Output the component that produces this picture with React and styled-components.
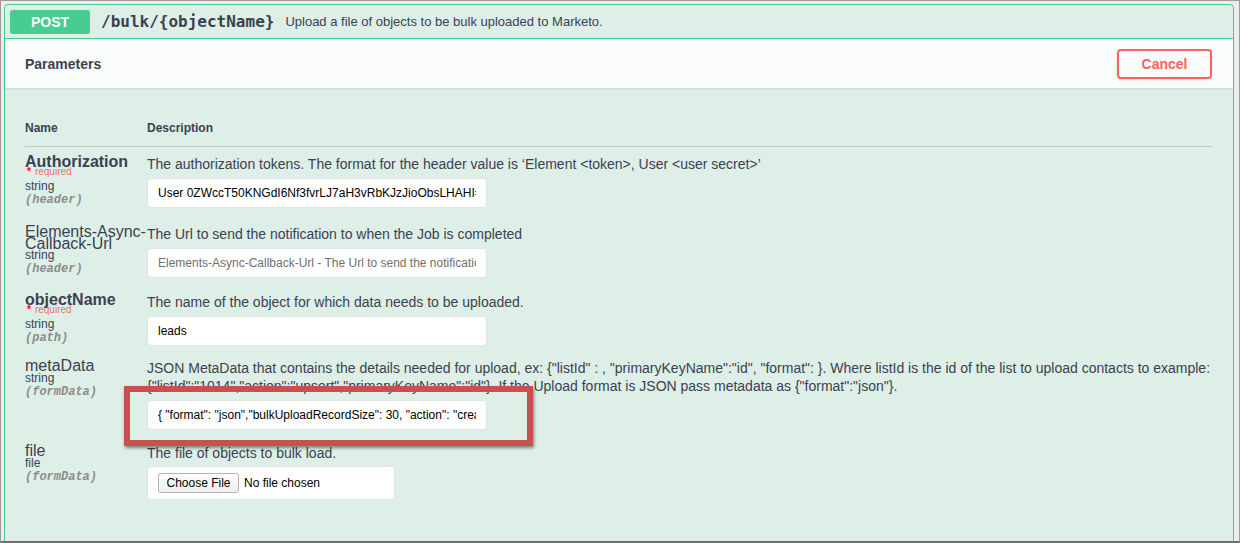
import React from 'react';
import styled, { createGlobalStyle } from 'styled-components';

const GlobalStyle = createGlobalStyle`
  html, body {
    margin: 0;
    padding: 0;
    background: #ececec;
  }
  body {
    font-family: "Liberation Sans", Arial, sans-serif;
    color: #3b4151;
  }
`;

const Frame = styled.div`
  width: 1240px;
  height: 543px;
  box-sizing: border-box;
  border: 1px solid #9c9c9c;
  border-bottom: 2px solid #6e6e6e;
  padding: 3px 5px 0 3px;
  background: #ececec;
  overflow: hidden;
`;

const Opblock = styled.div`
  border: 1px solid #49cc90;
  border-radius: 4px;
  background: #deefe7;
  height: 560px;
`;

const Summary = styled.div`
  display: flex;
  align-items: center;
  height: 33px;
  padding: 0 5px;
  border-bottom: 1px solid #49cc90;
`;

const Method = styled.span`
  display: flex;
  align-items: center;
  justify-content: center;
  min-width: 80px;
  height: 24px;
  border-radius: 3px;
  background: #49cc90;
  color: #fff;
  font-size: 14px;
  font-weight: 700;
  box-shadow: 0 0 1px rgba(0, 0, 0, 0.15);
`;

const Path = styled.span`
  margin-left: 11px;
  font-family: "DejaVu Sans Mono", monospace;
  font-size: 16px;
  font-weight: 700;
  color: #3b4151;
`;

const SummaryDesc = styled.span`
  margin-left: 11px;
  font-size: 13px;
  color: #3b4151;
`;

const SectionHeader = styled.div`
  display: flex;
  align-items: center;
  justify-content: space-between;
  height: 49px;
  padding: 0 20px;
  background: rgba(255, 255, 255, 0.8);
  box-shadow: 0 1px 2px rgba(0, 0, 0, 0.1);
`;

const SectionTitle = styled.h4`
  margin: 0;
  font-size: 14px;
  font-weight: 700;
  color: #3b4151;
`;

const CancelButton = styled.button`
  width: 95px;
  height: 30px;
  border: 2px solid #ff6060;
  border-radius: 4px;
  background: transparent;
  color: #ff6060;
  font-family: "Liberation Sans", Arial, sans-serif;
  font-size: 14px;
  font-weight: 700;
  box-shadow: 0 1px 2px rgba(0, 0, 0, 0.1);
  margin-right: 1px;
`;

const Table = styled.div`
  padding: 32px 20px 0;
`;

const HeadRow = styled.div`
  display: grid;
  grid-template-columns: 122px 1fr;
  padding-bottom: 10px;
  border-bottom: 1px solid rgba(59, 65, 81, 0.2);
  font-size: 12px;
  font-weight: 700;
  line-height: 16px;
`;

const Row = styled.div`
  display: grid;
  grid-template-columns: 122px 1fr;
  padding-top: ${p => p.$top || 15}px;
`;

const NameCell = styled.div`
  display: flex;
  flex-direction: column;
`;

const ParamName = styled.div`
  margin-top: 1px;
  font-size: 16px;
  line-height: 12px;
  font-weight: ${p => (p.$required ? 700 : 400)};
  color: #3b4151;
  white-space: pre-line;
`;

const Required = styled.div`
  margin-top: -1px;
  margin-left: 2px;
  font-size: 10px;
  line-height: 10px;
  color: rgba(255, 0, 0, 0.6);

  b {
    color: red;
    margin-right: 4px;
  }
`;

const ParamType = styled.div`
  margin-top: ${p => p.$gap}px;
  font-size: 12px;
  line-height: 13px;
  color: #3b4151;
`;

const ParamIn = styled.div`
  font-family: "Liberation Mono", monospace;
  font-size: 12px;
  line-height: 14px;
  font-style: italic;
  font-weight: 700;
  color: #8c8c8c;
`;

const DescCell = styled.div`
  font-size: 14px;
  line-height: 18px;
  color: #3b4151;
`;

const FieldWrap = styled.div`
  position: relative;
  width: 340px;
  margin-top: 5px;
`;

const TextInput = styled.input`
  display: block;
  box-sizing: border-box;
  width: 340px;
  height: 30px;
  padding: 0 10px;
  border: 1px solid #e3e3e3;
  border-radius: 4px;
  background: #fff;
  font-family: "Liberation Sans", Arial, sans-serif;
  font-size: 12px;
  color: #000;
  outline: none;

  &::placeholder {
    color: #6f6f6f;
  }
`;

const Highlight = styled.div`
  position: absolute;
  left: -23px;
  right: -46px;
  top: -14px;
  bottom: -16px;
  border: 6px solid #c8504f;
  box-shadow: 1px 2px 3px rgba(0, 0, 0, 0.45);
  pointer-events: none;
`;

const FileBox = styled.div`
  display: flex;
  align-items: center;
  gap: 5px;
  box-sizing: border-box;
  width: 248px;
  height: 34px;
  margin-top: 4px;
  padding: 0 10px;
  border: 1px solid #e3e3e3;
  border-radius: 4px;
  background: #fff;
  font-size: 12px;
  color: #000;
`;

const ChooseButton = styled.span`
  display: flex;
  align-items: center;
  justify-content: center;
  box-sizing: border-box;
  width: 81px;
  height: 20px;
  border: 1px solid #b4b4b4;
  border-radius: 3px;
  background: linear-gradient(#fdfdfd, #f0f0f0);
  font-size: 12px;
  color: #000;
`;

const params = [
  {
    name: 'Authorization',
    required: true,
    type: 'string',
    in: 'header',
    desc: 'The authorization tokens. The format for the header value is ‘Element <token>, User <user secret>’',
    value: 'User 0ZWccT50KNGdI6Nf3fvrLJ7aH3vRbKJzJioObsLHAHI=',
    top: 8,
  },
  {
    name: 'Elements-Async-\nCallback-Url',
    type: 'string',
    in: 'header',
    desc: 'The Url to send the notification to when the Job is completed',
    placeholder: 'Elements-Async-Callback-Url - The Url to send the notification to when the Job is completed',
    top: 17,
    gap: -1,
  },
  {
    name: 'objectName',
    required: true,
    type: 'string',
    in: 'path',
    desc: 'The name of the object for which data needs to be uploaded.',
    value: 'leads',
    top: 15,
  },
  {
    name: 'metaData',
    type: 'string',
    in: 'formData',
    desc: 'JSON MetaData that contains the details needed for upload, ex: {"listId" : , "primaryKeyName":"id", "format": }. Where listId is the id of the list to upload contacts to example: {"listId":"1014","action":"upsert","primaryKeyName":"id"}. If the Upload format is JSON pass metadata as {"format":"json"}.',
    value: '{ "format": "json","bulkUploadRecordSize": 30, "action": "create" }',
    highlight: true,
    top: 13,
  },
  {
    name: 'file',
    type: 'file',
    in: 'formData',
    desc: 'The file of objects to bulk load.',
    file: true,
    top: 14,
  },
];

const App = () => (
  <>
    <GlobalStyle />
    <Frame>
      <Opblock>
        <Summary>
          <Method>POST</Method>
          <Path>/bulk/{'{objectName}'}</Path>
          <SummaryDesc>Upload a file of objects to be bulk uploaded to Marketo.</SummaryDesc>
        </Summary>
        <SectionHeader>
          <SectionTitle>Parameters</SectionTitle>
          <CancelButton>Cancel</CancelButton>
        </SectionHeader>
        <Table>
          <HeadRow>
            <div>Name</div>
            <div>Description</div>
          </HeadRow>
          {params.map(p => (
            <Row key={p.name} $top={p.top}>
              <NameCell>
                <ParamName $required={p.required}>{p.name}</ParamName>
                {p.required && (
                  <Required>
                    <b>*</b>required
                  </Required>
                )}
                <ParamType $gap={p.required ? 3 : p.gap || 0}>{p.type}</ParamType>
                <ParamIn>({p.in})</ParamIn>
              </NameCell>
              <DescCell>
                {p.desc}
                {p.file ? (
                  <FileBox>
                    <ChooseButton>Choose File</ChooseButton>
                    No file chosen
                  </FileBox>
                ) : (
                  <FieldWrap>
                    <TextInput
                      type="text"
                      defaultValue={p.value}
                      placeholder={p.placeholder}
                    />
                    {p.highlight && <Highlight />}
                  </FieldWrap>
                )}
              </DescCell>
            </Row>
          ))}
        </Table>
      </Opblock>
    </Frame>
  </>
);

export default App;
